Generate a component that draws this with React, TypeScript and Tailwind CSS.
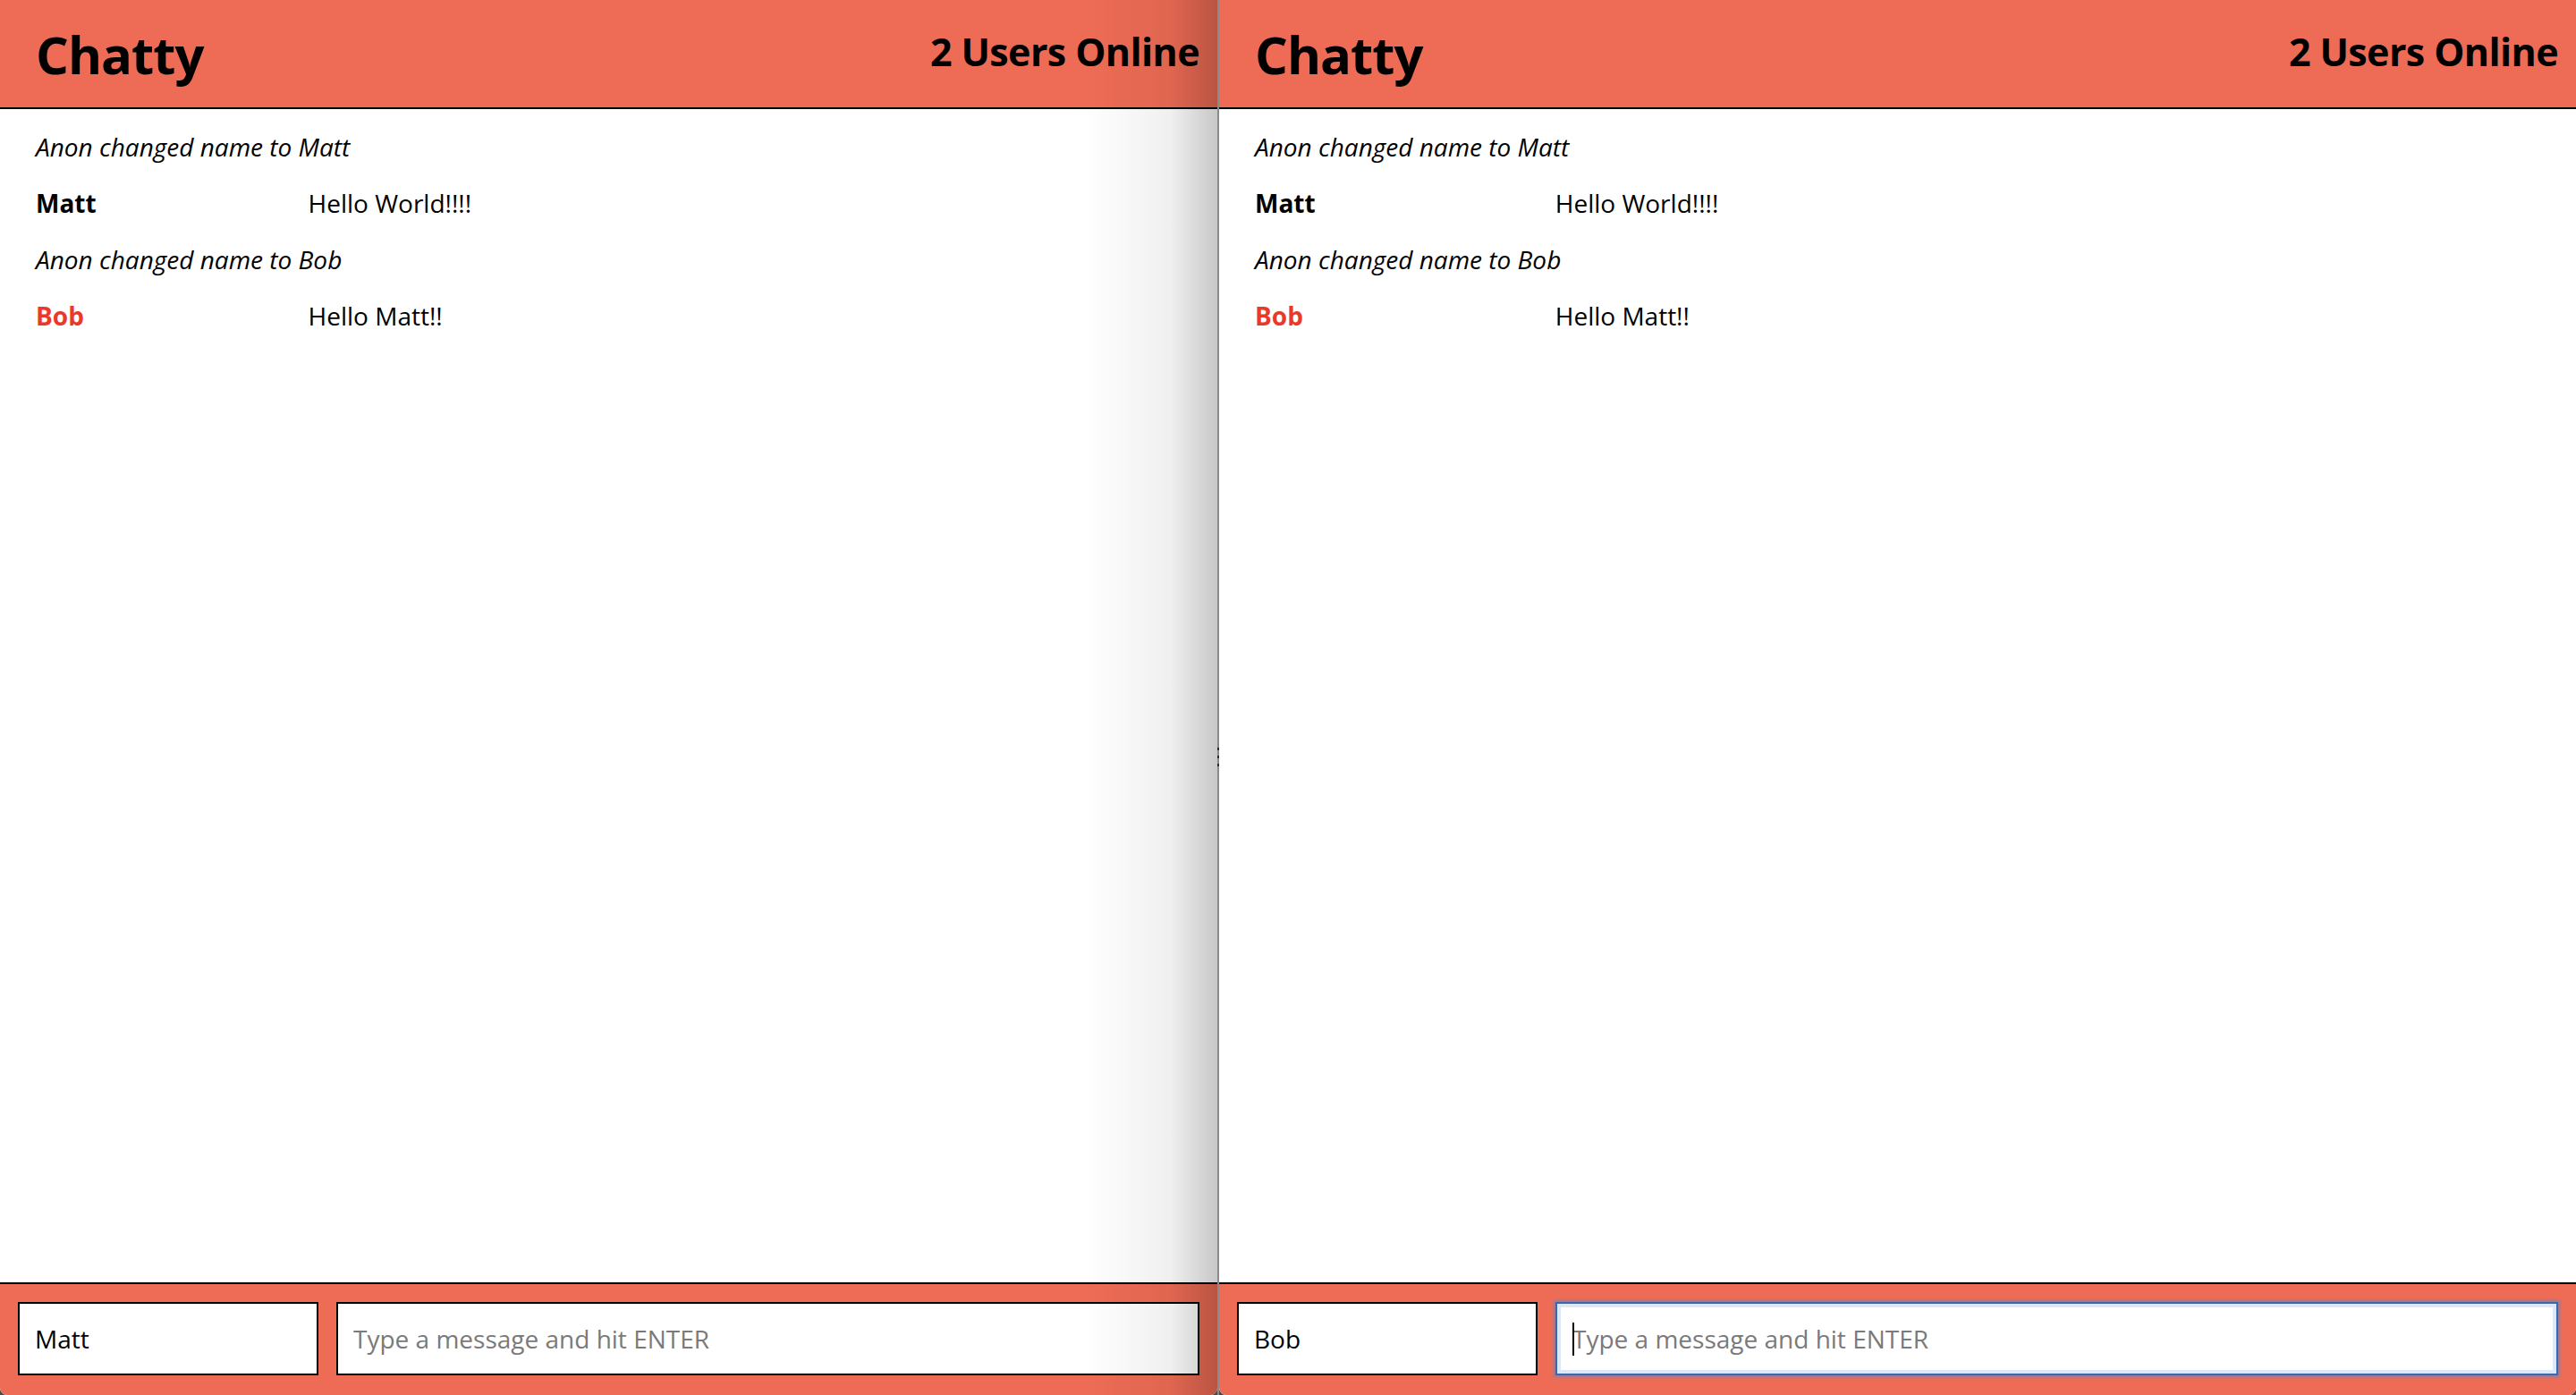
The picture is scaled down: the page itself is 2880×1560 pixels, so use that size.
import React from "react";

type PanelProps = {
  name: string;
  focused?: boolean;
  shadow?: boolean;
  className: string;
};

function Notification({ text }: { text: string }) {
  return <div className="italic leading-[63px]">{text}</div>;
}

function Message({ user, text, red }: { user: string; text: string; red?: boolean }) {
  return (
    <div className="flex leading-[63px]">
      <span className={red ? "w-[calc(20%+48px)] shrink-0 font-bold text-[#e8392b]" : "w-[calc(20%+48px)] shrink-0 font-bold text-black"}>
        {user}
      </span>
      <span className="flex-1">{text}</span>
    </div>
  );
}

function Panel({ name, focused, shadow, className }: PanelProps) {
  return (
    <div className={"relative flex h-full flex-col overflow-hidden rounded-b-[8px] bg-white " + className}>
      <header className="flex h-[122px] shrink-0 items-center justify-between border-b-2 border-black bg-[#ee6c55] pl-[40px] pr-[20px]">
        <h1 className="text-[58px] font-bold tracking-[-1px] text-black">Chatty</h1>
        <span className="pb-[4px] text-[43px] font-bold tracking-[-0.6px] text-black">2 Users Online</span>
      </header>
      <main className="flex-1 pl-[40px] pr-[38px] pt-[11px] text-[28px] text-black">
        <Notification text="Anon changed name to Matt" />
        <Message user="Matt" text="Hello World!!!!" />
        <Notification text="Anon changed name to Bob" />
        <Message user="Bob" text="Hello Matt!!" red />
      </main>
      <footer className="flex h-[126px] shrink-0 items-start gap-[20px] border-t-2 border-black bg-[#ee6c55] px-[20px] pt-[20px]">
        <input
          className="h-[82px] w-[336px] shrink-0 border-2 border-black bg-white px-[17px] text-[28px] text-black outline-none"
          defaultValue={name}
        />
        <div className="relative h-[82px] flex-1">
          <input
            className={
              focused
                ? "h-full w-full border-2 border-[#3a68ad] bg-white px-[17px] text-[28px] text-black outline-none shadow-[0_0_3px_2px_rgba(90,135,205,0.65),inset_0_0_0_4px_#dce7f7] placeholder:text-[#7a7a7a]"
                : "h-full w-full border-2 border-black bg-white px-[17px] text-[28px] text-black outline-none placeholder:text-[#7a7a7a]"
            }
            placeholder="Type a message and hit ENTER"
          />
          {focused && <span className="absolute left-[19px] top-[23px] h-[37px] w-[2px] bg-black" />}
        </div>
      </footer>
      {shadow && (
        <div className="pointer-events-none absolute bottom-0 right-0 top-0 w-[150px] bg-linear-to-l from-black/[0.22] via-black/[0.06] via-35% to-transparent" />
      )}
    </div>
  );
}

export default function App() {
  return (
    <div className="flex h-[1560px] w-[2880px] bg-[#4a4a4a] font-['Open_Sans',sans-serif]">
      <Panel name="Matt" shadow className="w-[1361px] shrink-0" />
      <div className="relative h-full w-[2px] shrink-0 bg-[#8a8a8a]">
        <span className="absolute left-0 top-[836px] h-[3px] w-[2px] bg-[#2a2a2a]" />
        <span className="absolute left-0 top-[845px] h-[3px] w-[2px] bg-[#2a2a2a]" />
        <span className="absolute left-0 top-[854px] h-[3px] w-[2px] bg-[#2a2a2a]" />
      </div>
      <Panel name="Bob" focused className="flex-1" />
    </div>
  );
}
